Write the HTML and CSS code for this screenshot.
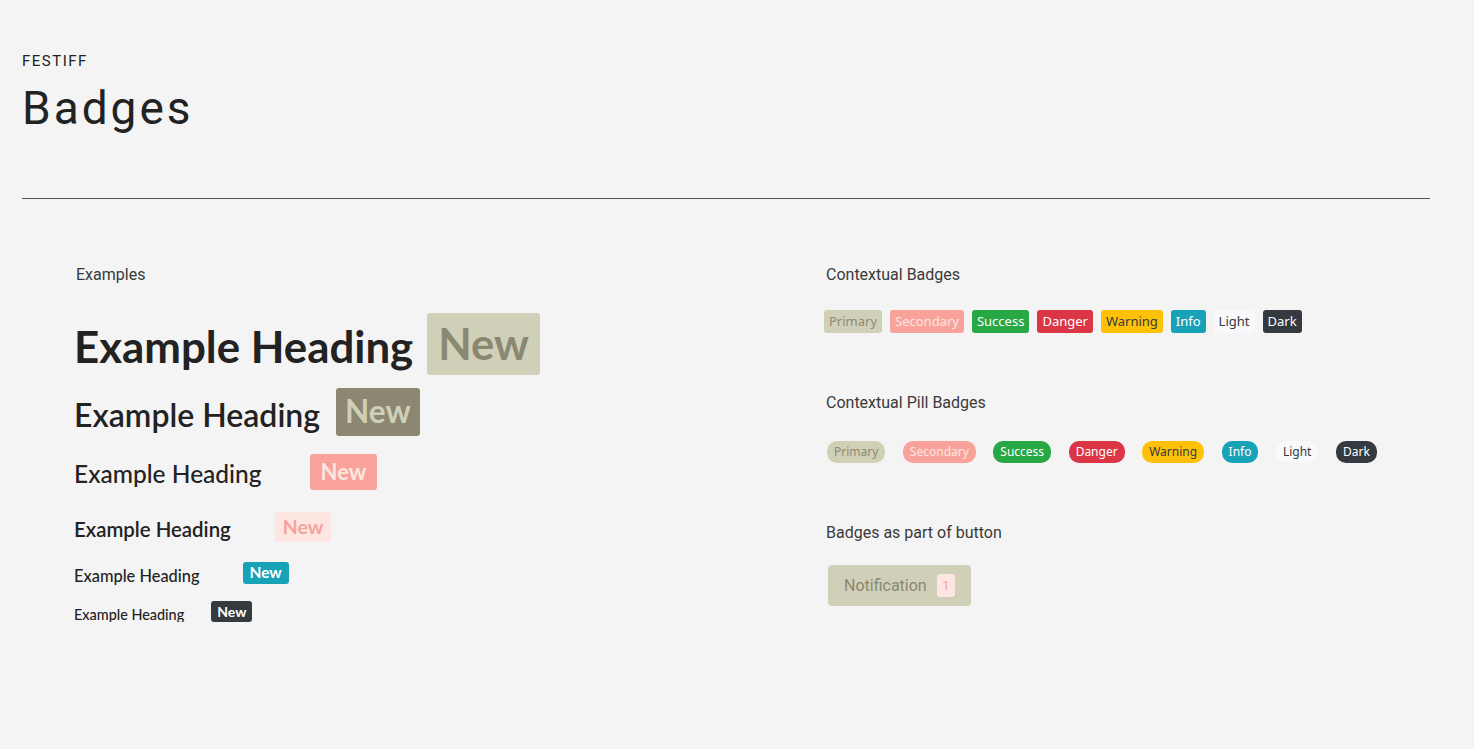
FILE: index.html
```html
<!DOCTYPE html>
<html lang="en">
<head>
    <meta charset="UTF-8">
    <meta name="viewport" content="width=device-width, initial-scale=1.0">
    <title>Festiff - Badges</title>
<link rel="stylesheet" href="styles.css">
</head>
<body>
    <header class="page-head">
        <div class="brand">FESTIFF</div>
        <h1 class="page-title">Badges</h1>
    </header>
    <hr class="rule">

    <main class="content">
        <section class="col">
            <h6 class="col-title">Examples</h6>
            <h1 class="ex ex1">Example Heading<span class="badge b1">New</span></h1>
            <h2 class="ex ex2">Example Heading<span class="badge b2">New</span></h2>
            <h3 class="ex ex3">Example Heading<span class="badge b3">New</span></h3>
            <h4 class="ex ex4">Example Heading<span class="badge b4">New</span></h4>
            <h5 class="ex ex5">Example Heading<span class="badge b5">New</span></h5>
            <h6 class="ex ex6">Example Heading<span class="badge b6">New</span></h6>
        </section>

        <section class="col">
            <h6 class="col-title">Contextual Badges</h6>
            <div class="chips">
                <span class="chip primary">Primary</span>
                <span class="chip secondary">Secondary</span>
                <span class="chip success">Success</span>
                <span class="chip danger">Danger</span>
                <span class="chip warning">Warning</span>
                <span class="chip info">Info</span>
                <span class="chip light">Light</span>
                <span class="chip dark">Dark</span>
            </div>

            <h6 class="col-title next">Contextual Pill Badges</h6>
            <div class="chips pills">
                <span class="chip pill primary">Primary</span>
                <span class="chip pill secondary">Secondary</span>
                <span class="chip pill success">Success</span>
                <span class="chip pill danger">Danger</span>
                <span class="chip pill warning">Warning</span>
                <span class="chip pill info">Info</span>
                <span class="chip pill light">Light</span>
                <span class="chip pill dark">Dark</span>
            </div>

            <h6 class="col-title next">Badges as part of button</h6>
            <button class="btn" type="button">Notification <span class="btn-count">1</span></button>
        </section>
    </main>
</body>
</html>
```

FILE: styles.css
```css
body{margin:0;background:#f4f4f4;font-family:Roboto,"Liberation Sans",sans-serif;color:#222;}

.page-head{padding:52px 22px 0;}
.brand{font-size:15px;letter-spacing:1.5px;line-height:18px;color:#222;}
.page-title{margin:11px 0 0;font-size:46px;font-weight:400;letter-spacing:3px;line-height:54px;color:#222;}
.rule{margin:63px 44px 0 22px;border:0;border-top:1px solid #555;height:0;}

.content{display:grid;grid-template-columns:750px 1fr;padding:66px 0 0 76px;}
.col-title{margin:0;font-size:16px;font-weight:400;line-height:20px;color:#3a3a3a;}
.col-title.next{margin-top:60px;}

/* example headings */
.ex{margin:0 0 0 -2px;font-family:Lato,"Liberation Sans",sans-serif;line-height:1;color:#222;white-space:nowrap;}
.ex1{font-size:43.8px;font-weight:700;margin-top:28px;}
.ex2{font-size:32px;font-weight:600;margin-top:13px;}
.ex3{font-size:24.5px;font-weight:500;margin-top:18px;}
.ex4{font-size:20.4px;font-weight:600;margin-top:22px;}
.ex5{font-size:16.4px;font-weight:500;margin-top:20px;}
.ex6{font-size:14.4px;font-weight:500;margin-top:17px;}

.badge{display:inline-block;font-family:Lato,"Liberation Sans",sans-serif;font-weight:700;line-height:1;border-radius:3px;vertical-align:3px;}
.b1{font-size:43.5px;padding:9px 11px;margin-left:14px;background:#d0d0b8;color:#8a8870;}
.b2{font-size:31.5px;padding:8.5px 9px;margin-left:16px;background:#8b8770;color:#d0d0b8;}
.b3{font-size:22px;padding:7px 11px;margin-left:48px;background:#f8a29a;color:#fde6e2;}
.b4{font-size:19.5px;padding:5px 8px;margin-left:44px;background:#fde6e2;color:#f7a399;}
.b5{font-size:15.5px;padding:3.5px 7px;margin-left:43px;background:#17a2b8;color:#fff;}
.b6{font-size:14px;padding:3.5px 6px;margin-left:27px;background:#343a40;color:#fff;}

/* contextual badges */
.chips{display:flex;gap:8px;margin:25px 0 0 -2px;}
.chip{font-family:"Noto Sans","Open Sans",sans-serif;font-size:13px;line-height:1;padding:5px 5px;border-radius:3px;}
.pills{gap:17.5px;margin:28px 0 0 1px;}
.pill{font-size:12px;padding:5px 7px;border-radius:10px;}

.primary{background:#d0d0b8;color:#8d8b72;}
.secondary{background:#f8a29a;color:#fde6e2;}
.success{background:#28a745;color:#fff;}
.danger{background:#dc3545;color:#fff;}
.warning{background:#ffc107;color:#343a40;}
.info{background:#17a2b8;color:#fff;}
.light{background:#f8f9fa;color:#343a40;}
.dark{background:#343a40;color:#fff;}

.btn{display:inline-flex;align-items:center;margin:22px 0 0 2px;height:41px;padding:0 16px;border:0;border-radius:4px;background:#d0d0b8;color:#8a8870;font-family:Roboto,"Liberation Sans",sans-serif;font-size:16px;}
.btn-count{margin-left:10px;padding:5px 5.5px;font-size:13px;line-height:1;border-radius:3px;background:#fde6e2;color:#f7a399;}
```
